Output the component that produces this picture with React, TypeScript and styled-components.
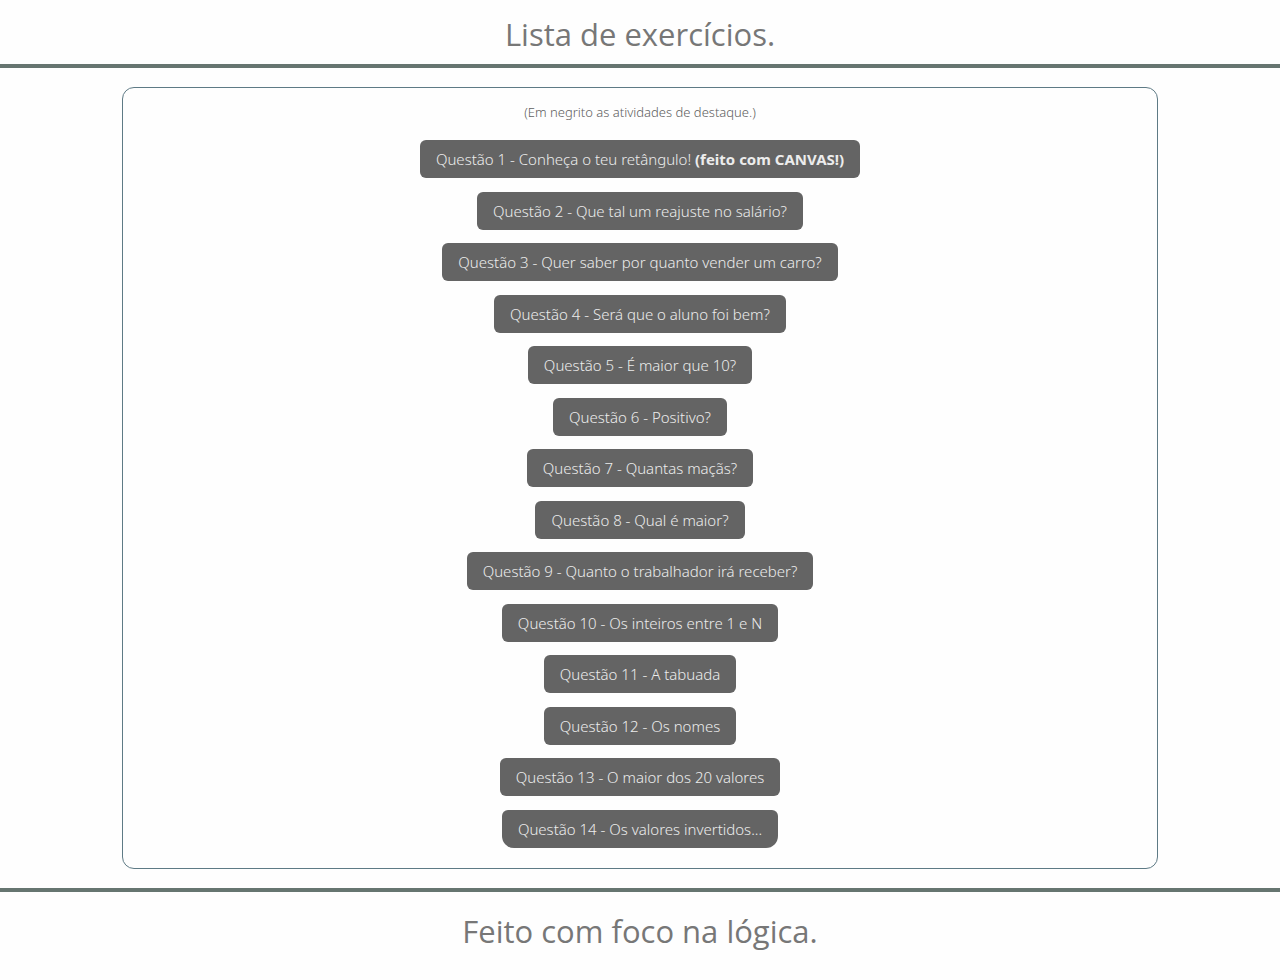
import React from 'react';
import styled, { createGlobalStyle } from 'styled-components';

const GlobalStyle = createGlobalStyle`
  *, *::before, *::after { box-sizing: border-box; }
  body {
    margin: 0;
    background: #fefefe;
    color: #777777;
    font-family: 'Noto Sans', 'Open Sans', sans-serif;
    font-size: 16px;
  }
`;

const Page = styled.div`
  min-height: 100vh;
  display: flex;
  flex-direction: column;
  text-align: center;
`;

const Header = styled.header`
  padding: 12px 16px 8px;
  border-bottom: 4px solid #667570;
`;

const Footer = styled.footer`
  padding: 17px 16px 27px;
  border-top: 4px solid #667570;
`;

const Title = styled.h1`
  margin: 0;
  font-family: 'Open Sans', 'Noto Sans', sans-serif;
  font-size: 31px;
  line-height: 44px;
  font-weight: 400;
`;

const Closing = styled.p`
  margin: 0;
  font-family: 'Open Sans', 'Noto Sans', sans-serif;
  font-size: 31px;
  line-height: 44px;
`;

const Main = styled.main`
  flex: 1;
  display: flex;
  flex-direction: column;
  align-items: center;
  padding: 19px 0;
`;

const Card = styled.section`
  flex: 1;
  display: flex;
  flex-direction: column;
  box-sizing: content-box;
  width: 80%;
  padding: 0 5px;
  border: 1px solid #5e7a85;
  border-radius: 12px;
`;

const Note = styled.p`
  margin: 14px 0 18px;
  color: #606060;
  font-size: 13px;
  font-weight: 300;
  line-height: 20px;
`;

const List = styled.ul`
  flex: 1;
  display: flex;
  flex-direction: column;
  align-items: center;
  justify-content: space-between;
  gap: 12px;
  margin: 0;
  padding: 0 0 20px;
  list-style: none;
`;

const Item = styled.li`
  display: flex;
  &:last-child a { border-radius: 6px 6px 12px 12px; }
`;

const QuestionLink = styled.a`
  padding: 8px 16px;
  border-radius: 6px;
  background: #646464;
  color: #ececec;
  font-size: 15px;
  font-weight: 300;
  line-height: 22px;
  text-decoration: none;
  &:hover { background: #444444; }
  strong { font-weight: 700; }
`;

const questions: { title: string; highlight?: string }[] = [
  { title: 'Conheça o teu retângulo!', highlight: '(feito com CANVAS!)' },
  { title: 'Que tal um reajuste no salário?' },
  { title: 'Quer saber por quanto vender um carro?' },
  { title: 'Será que o aluno foi bem?' },
  { title: 'É maior que 10?' },
  { title: 'Positivo?' },
  { title: 'Quantas maçãs?' },
  { title: 'Qual é maior?' },
  { title: 'Quanto o trabalhador irá receber?' },
  { title: 'Os inteiros entre 1 e N' },
  { title: 'A tabuada' },
  { title: 'Os nomes' },
  { title: 'O maior dos 20 valores' },
  { title: 'Os valores invertidos...' },
];

export default function App() {
  return (
    <Page>
      <GlobalStyle />
      <Header>
        <Title>Lista de exercícios.</Title>
      </Header>
      <Main>
        <Card>
          <Note>(Em negrito as atividades de destaque.)</Note>
          <List>
            {questions.map(({ title, highlight }, i) => (
              <Item key={title}>
                <QuestionLink href={`#questao-${i + 1}`}>
                  {`Questão ${i + 1} - ${title}`}
                  {highlight && <> <strong>{highlight}</strong></>}
                </QuestionLink>
              </Item>
            ))}
          </List>
        </Card>
      </Main>
      <Footer>
        <Closing>Feito com foco na lógica.</Closing>
      </Footer>
    </Page>
  );
}
